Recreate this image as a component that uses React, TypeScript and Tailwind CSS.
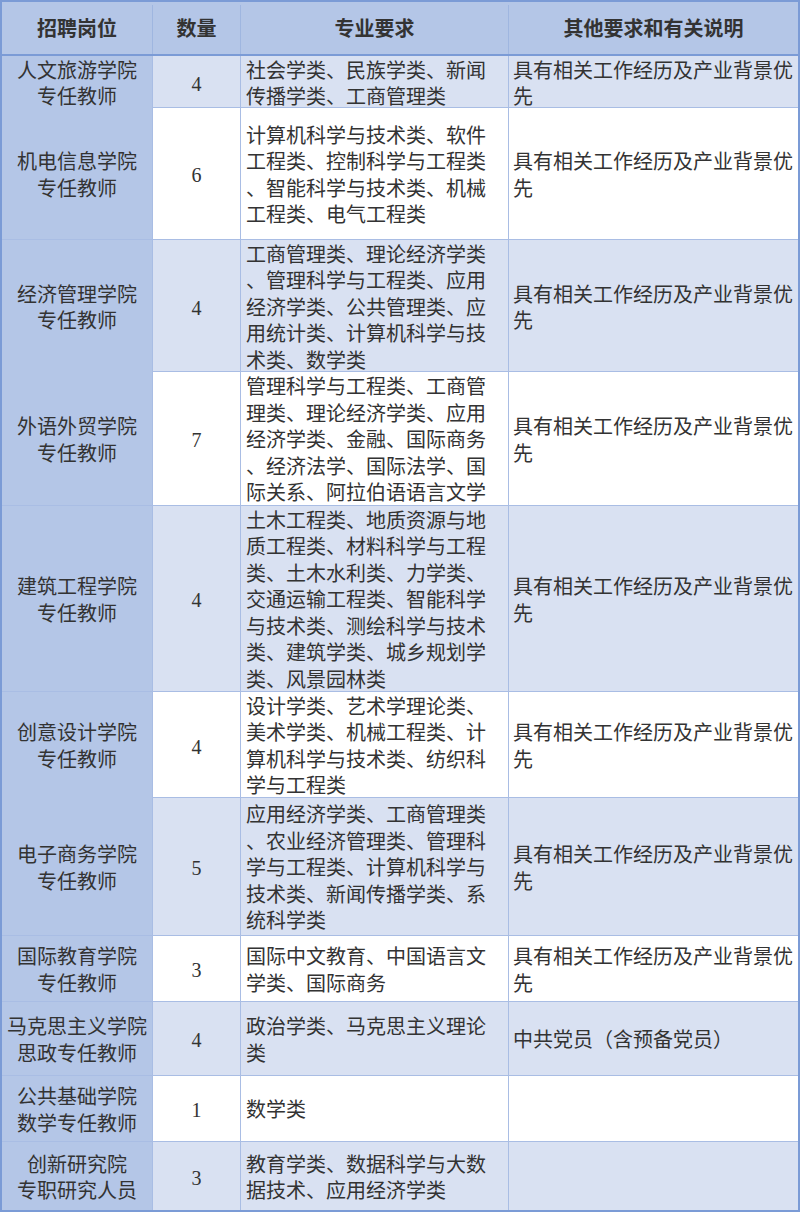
import React from "react";

type Row = {
  post: string[];
  count: string;
  major: string[];
  note: string[];
  h: string;
  shade: boolean;
};

const EXP = ["具有相关工作经历及产业背景优", "先"];

const ROWS: Row[] = [
  {
    post: ["人文旅游学院", "专任教师"],
    count: "4",
    major: ["社会学类、民族学类、新闻", "传播学类、工商管理类"],
    note: EXP,
    h: "h-[52px]",
    shade: true,
  },
  {
    post: ["机电信息学院", "专任教师"],
    count: "6",
    major: [
      "计算机科学与技术类、软件",
      "工程类、控制科学与工程类",
      "、智能科学与技术类、机械",
      "工程类、电气工程类",
    ],
    note: EXP,
    h: "h-[132px]",
    shade: false,
  },
  {
    post: ["经济管理学院", "专任教师"],
    count: "4",
    major: [
      "工商管理类、理论经济学类",
      "、管理科学与工程类、应用",
      "经济学类、公共管理类、应",
      "用统计类、计算机科学与技",
      "术类、数学类",
    ],
    note: EXP,
    h: "h-[132px]",
    shade: true,
  },
  {
    post: ["外语外贸学院", "专任教师"],
    count: "7",
    major: [
      "管理科学与工程类、工商管",
      "理类、理论经济学类、应用",
      "经济学类、金融、国际商务",
      "、经济法学、国际法学、国",
      "际关系、阿拉伯语语言文学",
    ],
    note: EXP,
    h: "h-[134px]",
    shade: false,
  },
  {
    post: ["建筑工程学院", "专任教师"],
    count: "4",
    major: [
      "土木工程类、地质资源与地",
      "质工程类、材料科学与工程",
      "类、土木水利类、力学类、",
      "交通运输工程类、智能科学",
      "与技术类、测绘科学与技术",
      "类、建筑学类、城乡规划学",
      "类、风景园林类",
    ],
    note: EXP,
    h: "h-[186px]",
    shade: true,
  },
  {
    post: ["创意设计学院", "专任教师"],
    count: "4",
    major: [
      "设计学类、艺术学理论类、",
      "美术学类、机械工程类、计",
      "算机科学与技术类、纺织科",
      "学与工程类",
    ],
    note: EXP,
    h: "h-[106px]",
    shade: false,
  },
  {
    post: ["电子商务学院", "专任教师"],
    count: "5",
    major: [
      "应用经济学类、工商管理类",
      "、农业经济管理类、管理科",
      "学与工程类、计算机科学与",
      "技术类、新闻传播学类、系",
      "统科学类",
    ],
    note: EXP,
    h: "h-[138px]",
    shade: true,
  },
  {
    post: ["国际教育学院", "专任教师"],
    count: "3",
    major: ["国际中文教育、中国语言文", "学类、国际商务"],
    note: EXP,
    h: "h-[66px]",
    shade: false,
  },
  {
    post: ["马克思主义学院", "思政专任教师"],
    count: "4",
    major: ["政治学类、马克思主义理论", "类"],
    note: ["中共党员（含预备党员）"],
    h: "h-[74px]",
    shade: true,
  },
  {
    post: ["公共基础学院", "数学专任教师"],
    count: "1",
    major: ["数学类"],
    note: [],
    h: "h-[66px]",
    shade: false,
  },
  {
    post: ["创新研究院", "专职研究人员"],
    count: "3",
    major: ["教育学类、数据科学与大数", "据技术、应用经济学类"],
    note: [],
    h: "h-[68px]",
    shade: true,
  },
];

const Lines = ({ lines }: { lines: string[] }) => (
  <div className="flex translate-y-[2px] flex-col">
    {lines.map((l, i) => (
      <span key={i} className="whitespace-nowrap">
        {l}
      </span>
    ))}
  </div>
);

const App = () => {
  return (
    <div
      className="w-[800px] bg-white text-[20px] leading-[26.4px] text-[#333333]"
      style={{ fontFamily: '"Liberation Serif", "Noto Sans CJK SC", serif' }}
    >
      <div className="border-2 border-[#7b9bd6]">
        {/* header */}
        <div className="grid h-[54px] grid-cols-[151px_88px_268px_1fr] border-b-2 border-[#7b9bd6] bg-[#b4c6e7] pt-[3px] font-bold">
          <div className="flex items-center justify-center border-r border-[#9fb6e0]">招聘岗位</div>
          <div className="flex items-center justify-center border-r border-[#9fb6e0]">数量</div>
          <div className="flex items-center justify-center border-r border-[#9fb6e0]">专业要求</div>
          <div className="flex items-center justify-center">其他要求和有关说明</div>
        </div>

        {ROWS.map((r, i) => (
          <div
            key={i}
            className={`grid grid-cols-[151px_88px_268px_1fr] ${r.h} ${
              i < ROWS.length - 1 ? "border-b border-[#a9bde4]" : ""
            } ${r.shade ? "bg-[#d9e1f2]" : "bg-white"}`}
          >
            <div className="flex items-center justify-center border-r border-[#a9bde4] bg-[#b4c6e7] text-center">
              <Lines lines={r.post} />
            </div>
            <div className="flex items-center justify-center border-r border-[#a9bde4]">
              <span className="translate-y-[2px]">{r.count}</span>
            </div>
            <div className="flex items-center border-r border-[#a9bde4] pl-[5px]">
              <Lines lines={r.major} />
            </div>
            <div className="flex items-center pl-[4px]">
              <Lines lines={r.note} />
            </div>
          </div>
        ))}
      </div>
    </div>
  );
};

export default App;
